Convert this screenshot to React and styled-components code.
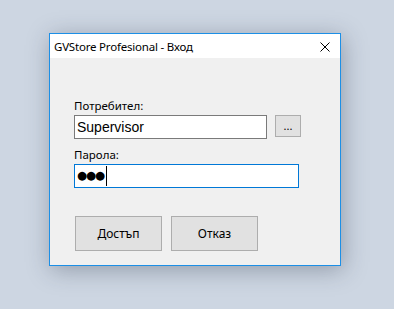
import React from "react";
import styled, { createGlobalStyle } from "styled-components";

const GlobalStyle = createGlobalStyle`
  html, body {
    margin: 0;
    padding: 0;
    background: #cdd6e2;
    font-family: "Noto Sans", "Liberation Sans", sans-serif;
  }
`;

const Desktop = styled.div`
  width: 394px;
  height: 309px;
  padding: 33px 0 0 49px;
  box-sizing: border-box;
  overflow: hidden;
`;

const Window = styled.div`
  width: 292px;
  height: 233px;
  box-sizing: border-box;
  border: 1px solid #1c8fe6;
  background: #f0f0f0;
  box-shadow: 2px 4px 22px rgba(40, 50, 70, 0.35);
  display: flex;
  flex-direction: column;
`;

const TitleBar = styled.div`
  height: 24px;
  background: #ffffff;
  display: flex;
  align-items: center;
  justify-content: space-between;
  padding: 0 10px 0 4px;
`;

const Title = styled.span`
  font-size: 11.5px;
  color: #000;
  letter-spacing: -0.2px;
`;

const CloseIcon = styled.svg`
  width: 10px;
  height: 10px;
  margin-top: 1px;
`;

const Content = styled.div`
  padding: 40px 0 0 24px;
  display: flex;
  flex-direction: column;
`;

const Label = styled.label`
  font-size: 11.5px;
  line-height: 15px;
  color: #000;
  margin-top: ${(p) => p.$top || 0}px;
`;

const Row = styled.div`
  display: flex;
  align-items: flex-start;
  gap: 8px;
  margin-top: 2px;
`;

const TextBox = styled.div`
  width: ${(p) => p.$width}px;
  height: 24px;
  box-sizing: border-box;
  background: #fff;
  border: 1px solid ${(p) => (p.$focused ? "#0078d7" : "#7a7a7a")};
  display: flex;
  align-items: center;
  padding-left: 2px;
  font-family: "Liberation Sans", Arial, sans-serif;
  font-size: 14px;
  color: #000;
`;

const Dots = styled.span`
  font-family: "DejaVu Sans", sans-serif;
  font-size: 11.5px;
  letter-spacing: -1px;
  line-height: 1;
`;

const Caret = styled.span`
  width: 1px;
  height: 20px;
  background: #000;
  margin-left: 2px;
`;

const SmallButton = styled.button`
  width: 26px;
  height: 22px;
  box-sizing: border-box;
  border: 1px solid #adadad;
  background: #e1e1e1;
  font-family: "Noto Sans", sans-serif;
  font-size: 11px;
  padding: 0 0 2px;
  color: #000;
`;

const Buttons = styled.div`
  display: flex;
  gap: 9px;
  margin: 28px 0 0 1px;
`;

const Button = styled.button`
  width: 87px;
  height: 35px;
  box-sizing: border-box;
  border: 1px solid #adadad;
  background: #e1e1e1;
  font-family: "Noto Sans", sans-serif;
  font-size: 12px;
  color: #000;
  padding: 0;
`;

export default function App() {
  return (
    <>
      <GlobalStyle />
      <Desktop>
        <Window>
          <TitleBar>
            <Title>GVStore Profesional - Вход</Title>
            <CloseIcon viewBox="0 0 10 10">
              <path d="M0.5 0.5 L9.5 9.5 M9.5 0.5 L0.5 9.5" stroke="#000" strokeWidth="1" />
            </CloseIcon>
          </TitleBar>
          <Content>
            <Label>Потребител:</Label>
            <Row>
              <TextBox $width={193}>Supervisor</TextBox>
              <SmallButton>...</SmallButton>
            </Row>
            <Label $top={8}>Парола:</Label>
            <Row>
              <TextBox $width={225} $focused>
                <Dots>●●●</Dots>
                <Caret />
              </TextBox>
            </Row>
            <Buttons>
              <Button>Достъп</Button>
              <Button>Отказ</Button>
            </Buttons>
          </Content>
        </Window>
      </Desktop>
    </>
  );
}
